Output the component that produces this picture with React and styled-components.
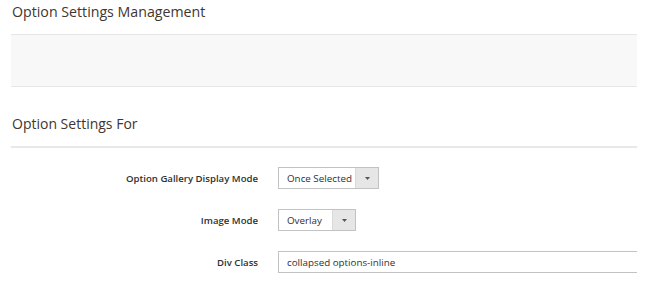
import styled, { createGlobalStyle } from "styled-components"

const GlobalStyle = createGlobalStyle`
  body {
    margin: 0;
    background: #ffffff;
    font-family: "Open Sans", "Liberation Sans", sans-serif;
    color: #41362f;
  }
`

const rows = [
  { label: "Option Gallery Display Mode", type: "select", value: "Once Selected", width: 101 },
  { label: "Image Mode", type: "select", value: "Overlay", width: 78 },
  { label: "Div Class", type: "input", value: "collapsed options-inline" },
]

export default function App() {
  return (
    <>
      <GlobalStyle />
      <Page>
        <Title>Option Settings Management</Title>
        <Panel />
        <SectionTitle>Option Settings For</SectionTitle>
        <Form>
          {rows.map((r) => (
            <Row key={r.label}>
              <Label>{r.label}</Label>
              {r.type === "select" ? (
                <Select width={r.width}>
                  <SelectText>{r.value}</SelectText>
                  <Arrow>
                    <svg width="5" height="3" viewBox="0 0 5 3">
                      <path d="M0 0h5L2.5 3z" fill="#5a534e" />
                    </svg>
                  </Arrow>
                </Select>
              ) : (
                <Input>{r.value}</Input>
              )}
            </Row>
          ))}
        </Form>
      </Page>
    </>
  )
}

const Page = styled.div`
  width: 626px;
  padding: 0 0 0 11px;
  display: flex;
  flex-direction: column;
`

const Title = styled.div`
  font-size: 14.2px;
  line-height: 23px;
  padding-left: 1px;
  margin-bottom: 11px;
`

const Panel = styled.div`
  height: 51px;
  background: #f8f8f8;
  border-top: 1px solid #e6e6e6;
  border-bottom: 1px solid #e6e6e6;
`

const SectionTitle = styled.div`
  font-size: 14px;
  line-height: 23px;
  padding: 25px 0 0 1px;
  height: 34px;
  border-bottom: 2px solid #e8e8e8;
`

const Form = styled.div`
  display: flex;
  flex-direction: column;
  gap: 20px;
  padding-top: 19px;
`

const Row = styled.div`
  display: grid;
  grid-template-columns: 247px 1fr;
  column-gap: 20px;
  align-items: center;
`

const Label = styled.div`
  text-align: right;
  font-size: 9.6px;
  font-weight: 600;
  color: #303030;
`

const Select = styled.div`
  width: ${(p) => p.width}px;
  height: 22px;
  box-sizing: border-box;
  border: 1px solid #c2c2c2;
  display: flex;
  font-size: 9.8px;
  color: #303030;
`

const SelectText = styled.div`
  flex: 1;
  padding-left: 8px;
  white-space: nowrap;
  display: flex;
  align-items: center;
`

const Arrow = styled.div`
  width: 22px;
  flex: none;
  background: #e6e6e6;
  border-left: 1px solid #d9d9d9;
  display: flex;
  align-items: center;
  justify-content: center;
`

const Input = styled.div`
  height: 22px;
  box-sizing: border-box;
  border: 1px solid #c2c2c2;
  border-right: none;
  padding-left: 8px;
  display: flex;
  align-items: center;
  font-size: 9.8px;
  color: #303030;
`
